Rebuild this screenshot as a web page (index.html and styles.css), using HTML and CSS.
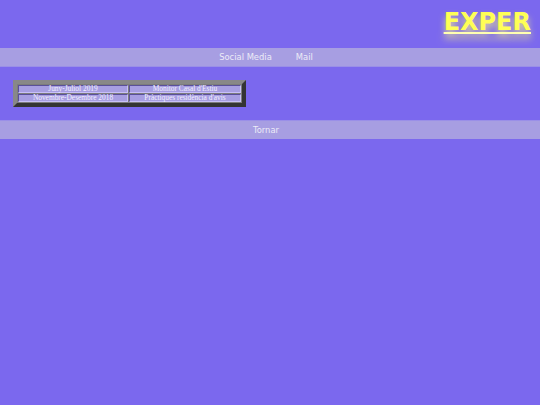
FILE: index.html
```html
<!DOCTYPE html>
<html>
<head>
<meta charset="utf-8">
<link rel="stylesheet" href="styles.css">
</head>
<body>
<header class="top">
  <a class="logo" href="#">EXPER</a>
</header>
<nav class="bar nav">
  <a href="#">Social Media</a>
  <a href="#">Mail</a>
</nav>
<main class="content">
  <table class="jobs">
    <tr><td class="c1">Juny-Juliol 2019</td><td class="c2">Monitor Casal d'Estiu</td></tr>
    <tr><td class="c1">Novembre-Desembre 2018</td><td class="c2">Pràctiques residència d'avis</td></tr>
  </table>
</main>
<nav class="bar back">
  <a href="#">Tornar</a>
</nav>
</body>
</html>
```
FILE: styles.css
```css
html, body {
  margin: 0;
  padding: 0;
  background: #7b68ee;
  height: 100%;
}
body {
  font-family: "DejaVu Sans", sans-serif;
}
.top {
  height: 48px;
  display: flex;
  justify-content: flex-end;
  align-items: flex-start;
  padding-right: 9px;
  box-sizing: border-box;
}
.logo {
  margin-top: 8px;
  font-family: "DejaVu Sans", sans-serif;
  font-weight: bold;
  font-size: 24px;
  line-height: 28px;
  color: #ffff55;
  text-decoration: underline;
  text-decoration-color: #ffffb0;
  text-shadow: 0 5px 7px rgba(255, 255, 120, 0.75);
}
.bar {
  background: #a79ee2;
  display: flex;
  justify-content: center;
  align-items: center;
  height: 18px;
  padding-right: 8px;
  font-size: 8.4px;
}
.bar a {
  color: #ecebf7;
  text-decoration: none;
}
.nav {
  gap: 24px;
  border-bottom: 1px solid #9a8fe8;
}
.back {
  border-top: 1px solid #9a8fe8;
}
.content {
  padding: 13px 0 13px 13px;
}
.jobs {
  border: 4px outset #888;
  background: #7c7c7c;
  border-spacing: 1px;
  font-family: "Liberation Serif", serif;
  font-size: 7.4px;
  color: #f2f0ff;
}
.jobs td {
  background: #a79ee2;
  border: 1px solid;
  border-color: #5a509a #c8c0f8 #c8c0f8 #5a509a;
  padding: 0;
  line-height: 6px;
  height: 6px;
  text-align: center;
  white-space: nowrap;
}
.jobs .c1 { width: 108px; }
.jobs .c2 { width: 110px; }
```
